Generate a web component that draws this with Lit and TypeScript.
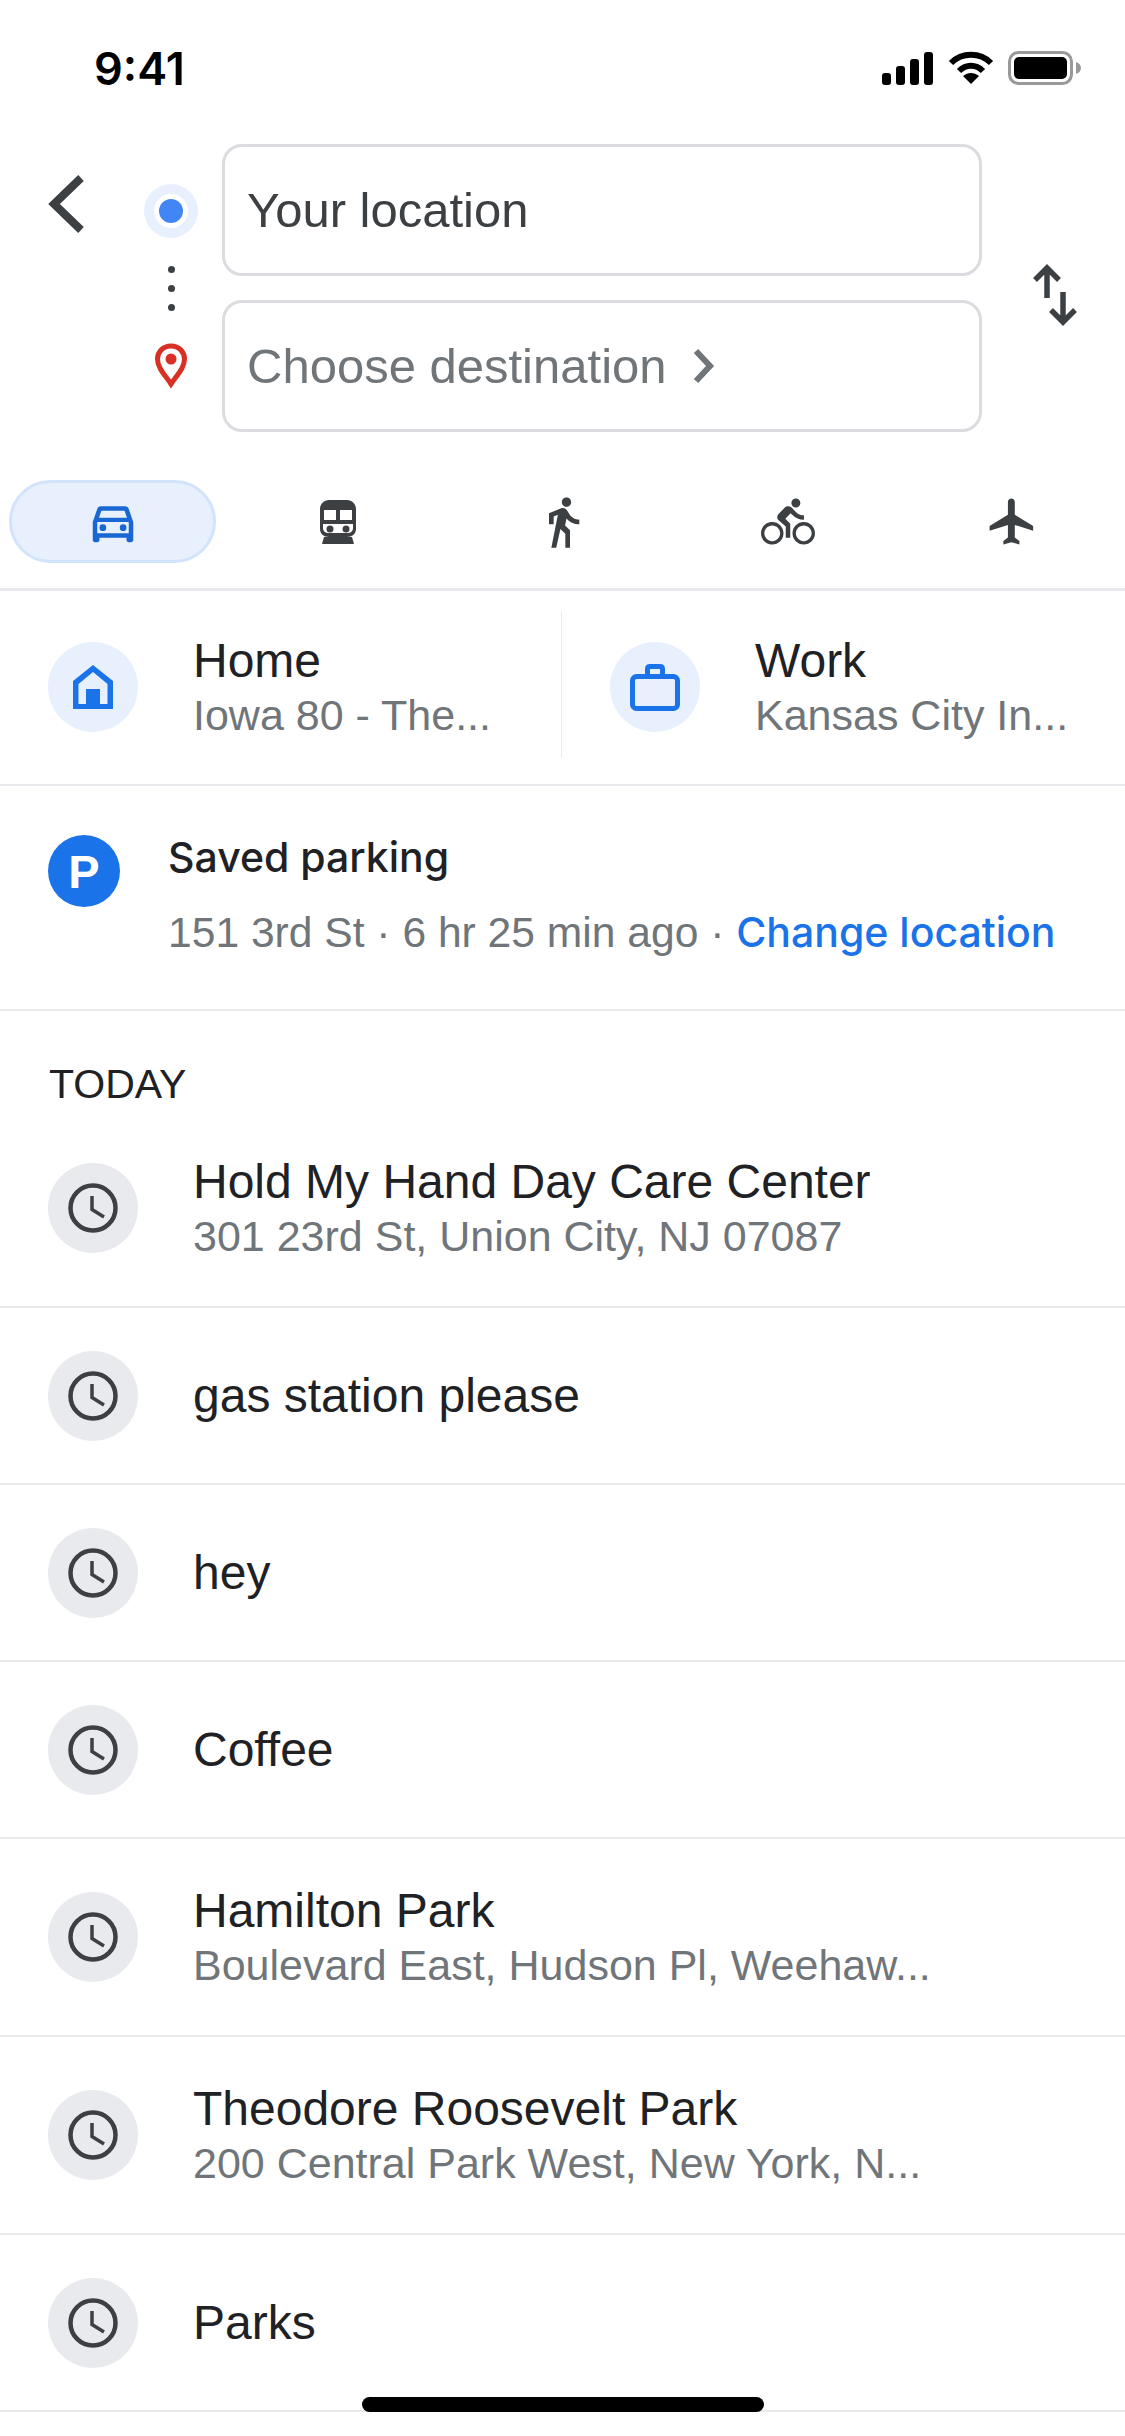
import { LitElement, html, css, svg } from 'lit';
import { customElement } from 'lit/decorators.js';

const CAR = svg`<path fill-rule="evenodd" d="M18.92 6.01C18.72 5.42 18.16 5 17.5 5h-11c-.66 0-1.21.42-1.42 1.01L3 12v8c0 .55.45 1 1 1h1c.55 0 1-.45 1-1v-1h12v1c0 .55.45 1 1 1h1c.55 0 1-.45 1-1v-8l-2.08-5.99zM6.85 7h10.29l1.08 3.11H5.77L6.85 7zM19 17H5v-5h14v5z"/><circle cx="7.5" cy="14.5" r="1.5"/><circle cx="16.5" cy="14.5" r="1.5"/>`;
const WALK = svg`<path d="M13.5 5.5c1.1 0 2-.9 2-2s-.9-2-2-2-2 .9-2 2 .9 2 2 2zM9.8 8.9L7 23h2.1l1.8-8 2.1 2v6h2v-7.5l-2.1-2 .6-3C14.8 12 16.8 13 19 13v-2c-1.9 0-3.5-1-4.3-2.4l-1-1.6c-.4-.6-1-1-1.7-1-.3 0-.5.1-.8.1L6 8.3V13h2V9.6l1.8-.7"/>`;
const BIKE = svg`<path d="M15.5 5.5c1.1 0 2-.9 2-2s-.9-2-2-2-2 .9-2 2 .9 2 2 2zM5 12c-2.8 0-5 2.2-5 5s2.2 5 5 5 5-2.2 5-5-2.2-5-5-5zm0 8.5c-1.9 0-3.5-1.6-3.5-3.5s1.6-3.5 3.5-3.5 3.5 1.6 3.5 3.5-1.6 3.5-3.5 3.5zm5.8-10l2.4-2.4.8.8c1.3 1.3 3 2.1 5.1 2.1V9c-1.5 0-2.7-.6-3.6-1.5l-1.9-1.9c-.5-.4-1-.6-1.6-.6s-1.1.2-1.4.6L7.8 8.4c-.4.4-.6.9-.6 1.4 0 .6.2 1.1.6 1.4L11 14v5h2v-6.2l-2.2-2.3zM19 12c-2.8 0-5 2.2-5 5s2.2 5 5 5 5-2.2 5-5-2.2-5-5-5zm0 8.5c-1.9 0-3.5-1.6-3.5-3.5s1.6-3.5 3.5-3.5 3.5 1.6 3.5 3.5-1.6 3.5-3.5 3.5z"/>`;
const PLANE = svg`<path d="M21 16v-2l-8-5V3.5c0-.83-.67-1.5-1.5-1.5S10 2.67 10 3.5V9l-8 5v2l8-2.5V19l-2 1.5V22l3.5-1 3.5 1v-1.5L13 19v-5.5l8 2.5z"/>`;

const history = [
  { title: 'Hold My Hand Day Care Center', sub: '301 23rd St, Union City, NJ 07087' },
  { title: 'gas station please' },
  { title: 'hey' },
  { title: 'Coffee' },
  { title: 'Hamilton Park', sub: 'Boulevard East, Hudson Pl, Weehaw...' },
  { title: 'Theodore Roosevelt Park', sub: '200 Central Park West, New York, N...' },
  { title: 'Parks' },
];

@customElement('app-root')
export class AppRoot extends LitElement {
  static styles = css`
    :host {
      display: block;
      width: 1125px;
      height: 2436px;
      position: relative;
      overflow: hidden;
      background: #fff;
      font-family: "Liberation Sans", Arial, sans-serif;
      color: #202124;
    }

    .status {
      height: 136px;
      padding: 0 43px 0 94px;
      display: flex;
      align-items: center;
      justify-content: space-between;
      box-sizing: border-box;
    }
    .time {
      font-family: Inter, sans-serif;
      font-size: 45px;
      font-weight: 600;
      color: #000;
    }
    .status-icons { display: flex; align-items: center; gap: 14px; }
    .status-icons svg { display: block; }

    .search {
      height: 344px;
      display: flex;
      box-sizing: border-box;
      padding-top: 8px;
    }
    .back { width: 144px; flex: none; display: flex; }
    .back-icon { margin: 29px 0 0 45px; }
    .markers {
      width: 54px;
      flex: none;
      display: flex;
      flex-direction: column;
      align-items: center;
    }
    .fields { width: 760px; flex: none; margin-left: 24px; display: flex; flex-direction: column; gap: 24px; }
    .field {
      height: 132px;
      box-sizing: border-box;
      border: 3px solid #dadce0;
      border-radius: 20px;
      display: flex;
      align-items: center;
      padding-left: 22px;
      font-size: 49px;
      color: #3c4043;
    }
    .field.dest { color: #70757a; gap: 25px; }
    .swap { flex: 1; padding: 120px 0 0 50px; }
    .swap svg { display: block; }

    .locate {
      margin-top: 40px;
      width: 54px;
      height: 54px;
      border-radius: 50%;
      background: #e8f0fe;
      display: flex;
      align-items: center;
      justify-content: center;
    }
    .locate i {
      width: 24px;
      height: 24px;
      border-radius: 50%;
      background: #4285f4;
      border: 5px solid #fff;
      display: block;
    }
    .dots { margin-top: 28px; display: flex; flex-direction: column; gap: 12px; }
    .dots i { width: 7px; height: 7px; border-radius: 50%; background: #3c4043; display: block; }
    .pin { margin-top: 32px; display: block; }

    .tabs {
      height: 111px;
      box-sizing: border-box;
      display: grid;
      grid-template-columns: repeat(5, 225px);
      border-bottom: 3px solid #e8eaed;
      padding-bottom: 25px;
    }
    .tab {
      display: flex;
      align-items: center;
      justify-content: center;
      fill: #3c4043;
    }
    .tab.active {
      margin: 0 9px;
      border: 3px solid #d2e3fc;
      border-radius: 42px;
      background: #e8f0fe;
      fill: #1967d2;
    }

    .places {
      height: 195px;
      box-sizing: border-box;
      display: flex;
      align-items: flex-start;
      padding-top: 21px;
      border-bottom: 2px solid #e8eaed;
    }
    .place {
      width: 561px;
      height: 146px;
      box-sizing: border-box;
      padding: 4px 0 0 48px;
      display: flex;
      align-items: center;
      gap: 55px;
    }
    .place + .place {
      flex: 1;
      border-left: 1px solid #e8eaed;
      padding-left: 48px;
    }
    .circle {
      width: 90px;
      height: 90px;
      border-radius: 50%;
      flex: none;
      display: flex;
      align-items: center;
      justify-content: center;
    }
    .circle.blue { background: #e8f0fe; }
    .circle.grey { background: #e8eaed; }
    .circle svg { display: block; }

    .title { font-size: 48px; line-height: 56px; color: #202124; white-space: nowrap; }
    .sub { font-size: 43px; line-height: 52px; color: #70757a; white-space: nowrap; }

    .parking {
      height: 225px;
      box-sizing: border-box;
      border-bottom: 2px solid #e8eaed;
      display: flex;
      padding: 49px 0 0 48px;
      gap: 48px;
    }
    .p-badge {
      width: 72px;
      height: 72px;
      border-radius: 50%;
      background: #1a73e8;
      color: #fff;
      font-size: 47px;
      font-weight: 700;
      display: flex;
      align-items: center;
      justify-content: center;
      flex: none;
    }
    .p-title { font-family: Inter, sans-serif; font-size: 41px; font-weight: 500; line-height: 50px; color: #202124; margin-top: -3px; }
    .p-sub { font-size: 42.6px; line-height: 50px; color: #70757a; margin-top: 25px; white-space: nowrap; }
    .p-sub a { font-family: Inter, sans-serif; font-size: 41px; color: #1a73e8; font-weight: 500; }

    .heading {
      height: 99px;
      box-sizing: border-box;
      padding: 50px 0 0 49px;
      font-size: 41px;
      line-height: 46px;
      color: #202124;
    }

    .row {
      box-sizing: border-box;
      border-bottom: 2px solid #e8eaed;
      padding-left: 48px;
      display: flex;
      align-items: center;
      gap: 55px;
    }
    .row.tall { height: 198px; }
    .row.short { height: 177px; }

    .home-bar {
      position: absolute;
      left: 362px;
      top: 2397px;
      width: 402px;
      height: 15px;
      border-radius: 8px;
      background: #000;
    }
  `;

  private renderStatus() {
    return html`<div class="status">
      <span class="time">9:41</span>
      <div class="status-icons">
        <svg width="52" height="33" viewBox="0 0 52 33" fill="#000">
          <rect x="0" y="21" width="9" height="12" rx="3"/>
          <rect x="14" y="14" width="9" height="19" rx="3"/>
          <rect x="28" y="7" width="9" height="26" rx="3"/>
          <rect x="42" y="0" width="9" height="33" rx="3"/>
        </svg>
        <svg width="46" height="34" viewBox="0 0 46 34" fill="none" stroke="#000" stroke-width="6">
          <path d="M3 12 C14 1 32 1 43 12"/>
          <path d="M11 20 C18 13 28 13 35 20"/>
          <path d="M23 33 L15 25 C20 21 26 21 31 25 Z" fill="#000" stroke="none"/>
        </svg>
        <svg width="74" height="34" viewBox="0 0 74 34">
          <rect x="1.5" y="1.5" width="62" height="31" rx="9" fill="none" stroke="#999" stroke-width="3"/>
          <rect x="6" y="6" width="53" height="22" rx="5" fill="#000"/>
          <path d="M68 11 C71 12 73 14 73 17 C73 20 71 22 68 23 Z" fill="#999"/>
        </svg>
      </div>
    </div>`;
  }

  private renderSearch() {
    return html`<div class="search">
      <div class="back">
        <svg class="back-icon" width="40" height="62" viewBox="0 0 40 62" fill="none" stroke="#3c4043" stroke-width="8">
          <path d="M36 5 L9 31 L36 57"/>
        </svg>
      </div>
      <div class="markers">
        <div class="locate"><i></i></div>
        <div class="dots"><i></i><i></i><i></i></div>
        <svg class="pin" width="32" height="46" viewBox="0 0 32 46">
          <path d="M16 3 C8 3 2.500 9 2.500 16 C2.500 25 10 32 16 41 C22 32 29.500 25 29.500 16 C29.500 9 24 3 16 3 Z" fill="none" stroke="#d93025" stroke-width="5"/>
          <circle cx="16" cy="16" r="5.500" fill="#d93025"/>
        </svg>
      </div>
      <div class="fields">
        <div class="field">Your location</div>
        <div class="field dest">
          <span>Choose destination</span>
          <svg width="24" height="36" viewBox="0 0 24 36" fill="none" stroke="#70757a" stroke-width="6">
            <path d="M4 3 L18 18 L4 33"/>
          </svg>
        </div>
      </div>
      <div class="swap">
        <svg width="46" height="62" viewBox="0 0 46 62" fill="none" stroke="#3c4043" stroke-width="5.500">
          <path d="M15 34 V4 M3 16 L15 4 L27 16"/>
          <path d="M31 28 V58 M19 46 L31 58 L43 46"/>
        </svg>
      </div>
    </div>`;
  }

  private renderTabs() {
    return html`<div class="tabs">
      <div class="tab active"><svg width="54" height="54" viewBox="0 0 24 24">${CAR}</svg></div>
      <div class="tab">
        <svg width="36" height="44" viewBox="0 0 36 44">
          <path fill-rule="evenodd" d="M9 0 H27 C32 0 36 4 36 9 V29 C36 34 32 37 27 37 H9 C4 37 0 34 0 29 V9 C0 4 4 0 9 0 Z M4 10 V20 H16 V10 Z M20 10 V20 H32 V10 Z M3 24 V28 C3 31 5 33 9 33 H27 C31 33 33 31 33 28 V24 Z"/>
          <circle cx="10" cy="29" r="3.500"/>
          <circle cx="26" cy="29" r="3.500"/>
          <path d="M4 37 H32 L34 44 H2 Z"/>
        </svg>
      </div>
      <div class="tab"><svg width="56" height="56" viewBox="0 0 24 24">${WALK}</svg></div>
      <div class="tab"><svg width="54" height="54" viewBox="0 0 24 24">${BIKE}</svg></div>
      <div class="tab"><svg width="55" height="55" viewBox="0 0 24 24">${PLANE}</svg></div>
    </div>`;
  }

  private renderPlaces() {
    return html`<div class="places">
      <div class="place">
        <div class="circle blue">
          <svg width="40" height="44" viewBox="0 0 40 44" fill="#1a73e8">
            <path fill-rule="evenodd" d="M20 0 L40 16 V44 H0 V16 Z M20 7 L5.500 19 V39 H13 V24 H27 V39 H34.500 V19 Z"/>
          </svg>
        </div>
        <div>
          <div class="title">Home</div>
          <div class="sub">Iowa 80 - The...</div>
        </div>
      </div>
      <div class="place">
        <div class="circle blue">
          <svg width="50" height="47" viewBox="0 0 50 47" fill="none" stroke="#1a73e8" stroke-width="5">
            <rect x="2.500" y="12.500" width="45" height="32" rx="4"/>
            <path d="M17.500 12 V5 C17.500 3.500 18.500 2.500 20 2.500 H30 C31.500 2.500 32.500 3.500 32.500 5 V12"/>
          </svg>
        </div>
        <div>
          <div class="title">Work</div>
          <div class="sub">Kansas City In...</div>
        </div>
      </div>
    </div>`;
  }

  private renderClock() {
    return html`<svg width="50" height="50" viewBox="0 0 50 50" fill="none" stroke="#3c4043">
      <circle cx="25" cy="25" r="22.500" stroke-width="4.500"/>
      <path d="M24 13 V26.500 L36 34" stroke-width="3.500"/>
    </svg>`;
  }

  render() {
    return html`
      ${this.renderStatus()}
      ${this.renderSearch()}
      ${this.renderTabs()}
      ${this.renderPlaces()}
      <div class="parking">
        <div class="p-badge">P</div>
        <div>
          <div class="p-title">Saved parking</div>
          <div class="p-sub">151 3rd St · 6 hr 25 min ago · <a>Change location</a></div>
        </div>
      </div>
      <div class="heading">TODAY</div>
      ${history.map(
        (h) => html`<div class="row ${h.sub ? 'tall' : 'short'}">
          <div class="circle grey">${this.renderClock()}</div>
          <div>
            <div class="title">${h.title}</div>
            ${h.sub ? html`<div class="sub">${h.sub}</div>` : ''}
          </div>
        </div>`
      )}
      <div class="home-bar"></div>
    `;
  }
}
